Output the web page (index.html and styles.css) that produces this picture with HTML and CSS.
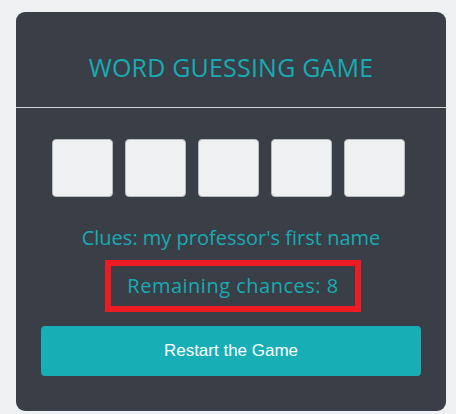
FILE: index.html
```html
<!DOCTYPE html>
<html lang="en">
<head>
<meta charset="utf-8">
<title>Word Guessing Game</title>
<link rel="stylesheet" href="styles.css">
</head>
<body>
  <main class="card">
    <header class="card-header">
      <h1 class="title">WORD GUESSING GAME</h1>
    </header>
    <section class="card-body">
      <div class="letters">
        <input class="letter" type="text" maxlength="1">
        <input class="letter" type="text" maxlength="1">
        <input class="letter" type="text" maxlength="1">
        <input class="letter" type="text" maxlength="1">
        <input class="letter" type="text" maxlength="1">
      </div>
      <p class="clue">Clues: my professor's first name</p>
      <div class="chances-wrap">
        <p class="chances">Remaining chances: 8</p>
      </div>
      <button class="restart" type="button">Restart the Game</button>
    </section>
  </main>
</body>
</html>
```

FILE: styles.css
```css
* {
  box-sizing: border-box;
}

html, body {
  margin: 0;
  background: #eff0f2;
}

body {
  padding: 12px 10px 0 16px;
  font-family: "Open Sans", "Noto Sans", sans-serif;
}

.card {
  width: 430px;
  background: #3a3e47;
  border-radius: 9px;
  overflow: hidden;
}

.card-header {
  padding: 40px 0 25px;
  border-bottom: 1px solid #d2d3d6;
}

.title {
  margin: 0;
  text-align: center;
  font-size: 25px;
  line-height: 30px;
  letter-spacing: 0.2px;
  font-weight: 400;
  color: #17abb3;
}

.card-body {
  padding: 31px 25px 35px;
  display: flex;
  flex-direction: column;
  align-items: center;
}

.letters {
  display: flex;
  gap: 12px;
  margin-left: -5px;
}

.letter {
  width: 61px;
  height: 58px;
  margin: 0;
  padding: 0;
  border: 1px solid #b9babd;
  border-radius: 4px;
  background: #eff0f2;
  outline: none;
}

.clue {
  margin: 29px 0 0;
  font-size: 20px;
  line-height: 24px;
  color: #17abb3;
  text-align: center;
  white-space: nowrap;
}

.chances-wrap {
  margin-top: 10px;
  margin-left: 4px;
  width: 256px;
  border: 6px solid #ed1c24;
  padding: 8px 0;
}

.chances {
  margin: 0;
  font-size: 20px;
  line-height: 24px;
  letter-spacing: 0.5px;
  color: #17abb3;
  text-align: center;
  white-space: nowrap;
}

.restart {
  margin-top: 14px;
  width: 100%;
  height: 50px;
  border: none;
  border-radius: 4px;
  background: #17aeb5;
  color: #ffffff;
  font-family: "Liberation Sans", Arial, sans-serif;
  font-size: 17px;
}
```
